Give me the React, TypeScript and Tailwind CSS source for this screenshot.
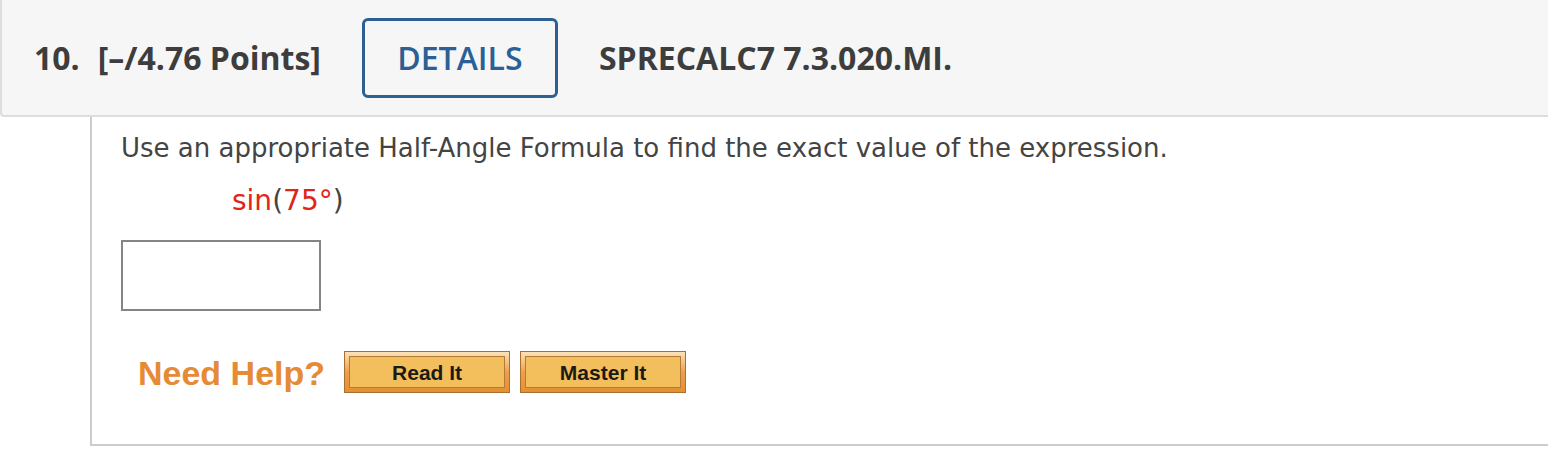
const HelpButton = ({ label }: { label: string }) => {
  return (
    <button
      type="button"
      className="h-[42px] w-full border border-[#a8712f] bg-gradient-to-b from-[#fbe2b8] via-[#eca04a] to-[#e48f36] p-[4px]"
    >
      <span className="flex h-full w-full items-center justify-center border border-[#b37a38] bg-[#f3bf5c] [font-family:'Liberation_Sans',Arial,sans-serif] text-[21px] font-bold leading-none text-[#1c1a14]">
        {label}
      </span>
    </button>
  );
};

export default function App() {
  return (
    <div className="h-[474px] w-full overflow-hidden bg-white">
      <header className="flex h-[117px] items-center rounded-bl-[4px] border-b-2 border-l-2 border-[#dddddd] bg-[#f6f6f6] pl-[32px] [font-family:'Open_Sans',sans-serif] text-[32px] leading-none text-[#3d3d3d]">
        <span className="font-bold">10.</span>
        <span className="ml-[18px] font-bold">[–/4.76 Points]</span>
        <div className="ml-[41px] flex h-[80px] w-[196px] items-center justify-center rounded-[6px] border-[3px] border-[#2c5f92] text-[32px] font-semibold text-[#2a6096]">
          DETAILS
        </div>
        <span className="ml-[41px] font-bold">SPRECALC7 7.3.020.MI.</span>
      </header>

      <main className="ml-[90px] h-[329px] border-b-2 border-l-2 border-[#cccccc] pl-[29px] pt-[16px] [font-family:'DejaVu_Sans',Verdana,sans-serif] text-[#444444]">
        <p className="text-[26px] leading-[30px]">
          Use an appropriate Half-Angle Formula to find the exact value of the expression.
        </p>
        <p className="ml-[111px] mt-[23px] text-[28px] leading-[30px]">
          <span className="text-[#e2231a]">sin</span>(<span className="text-[#e2231a]">75°</span>)
        </p>
        <input
          type="text"
          className="mt-[24px] block h-[71px] w-[200px] border-2 border-[#858585] bg-white outline-none"
        />
        <div className="mt-[40px] flex items-center">
          <span className="ml-[17px] mt-[1px] [font-family:'Liberation_Sans',Arial,sans-serif] text-[34px] font-bold leading-none text-[#e58b35]">
            Need Help?
          </span>
          <div className="ml-[19px] flex gap-[10px]">
            <div className="w-[166px]">
              <HelpButton label="Read It" />
            </div>
            <div className="w-[166px]">
              <HelpButton label="Master It" />
            </div>
          </div>
        </div>
      </main>
    </div>
  );
}
